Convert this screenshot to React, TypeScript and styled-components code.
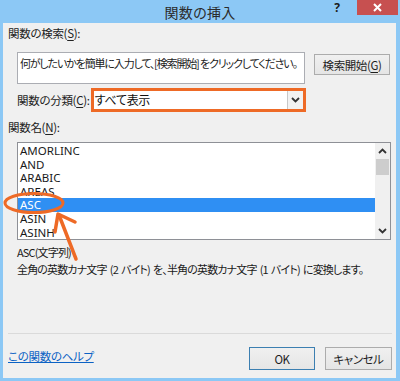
import React from "react";
import styled, { createGlobalStyle } from "styled-components";

const Global = createGlobalStyle`
  html, body { margin: 0; padding: 0; }
  body { width: 400px; height: 381px; overflow: hidden; background: #8cc8f5; }
  * { box-sizing: border-box; }
`;

const JP = `"Noto Sans CJK JP", "Noto Sans", sans-serif`;
const UI = `"Noto Sans", "Noto Sans CJK JP", sans-serif`;

const Window = styled.div`
  position: relative;
  width: 400px;
  height: 381px;
  background: #8cc8f5;
  display: flex;
  flex-direction: column;
  font-family: ${JP};
  font-feature-settings: "palt";
  color: #1e1e1e;
`;

const TitleBar = styled.div`
  height: 23px;
  display: grid;
  grid-template-columns: 1fr auto 1fr;
  align-items: start;
`;

const Title = styled.div`
  grid-column: 2;
  font-size: 14px;
  line-height: 24px;
  color: #2b2b2b;
  letter-spacing: 0.3px;
`;

const Controls = styled.div`
  grid-column: 3;
  display: flex;
  justify-content: flex-end;
  align-items: flex-start;
  padding-right: 2px;
`;

const Help = styled.div`
  font-family: ${UI};
  font-weight: 700;
  font-size: 12px;
  line-height: 16px;
  color: #1a1a1a;
  width: 24px;
  text-align: center;
`;

const Close = styled.div`
  width: 41px;
  height: 15px;
  background: #c75050;
  display: flex;
  align-items: center;
  justify-content: center;
  margin-left: 8px;
`;

const Body = styled.div`
  flex: 1;
  margin: 0 4px 3px 3px;
  background: #f0f0f0;
  display: flex;
  flex-direction: column;
  padding: 2px 4px 8px 5px;
`;

const Label = styled.div<{ $top?: number }>`
  font-size: 11.5px;
  letter-spacing: -0.3px;
  line-height: 16px;
  margin-top: ${(p) => p.$top ?? 0}px;
  color: #222;
  white-space: nowrap;
  u { text-decoration: underline; text-underline-offset: 2px; }
`;

const SearchRow = styled.div`
  display: flex;
  align-items: flex-start;
  margin-top: 11px;
  padding-left: 9px;
`;

const SearchBox = styled.div`
  width: 288px;
  height: 32px;
  background: #fff;
  border: 1px solid #abadb3;
  font-size: 11px;
  letter-spacing: -1.15px;
  line-height: 18px;
  padding: 1px 2px;
  color: #222;
  white-space: nowrap;
  overflow: hidden;
`;

const Button = styled.div<{ $w: number; $default?: boolean }>`
  width: ${(p) => p.$w}px;
  height: ${(p) => (p.$default !== undefined ? 23 : 21)}px;
  border: 1px solid ${(p) => (p.$default ? "#3c7fb1" : "#acacac")};
  background: linear-gradient(#f0f0f0, #e5e5e5);
  font-size: 11.5px;
  letter-spacing: -0.4px;
  display: flex;
  align-items: center;
  justify-content: center;
  color: #1e1e1e;
  white-space: nowrap;
  u { text-decoration: underline; text-underline-offset: 2px; }
`;

const SearchButton = styled(Button)`
  margin-left: 9px;
  margin-top: 2px;
`;

const CategoryRow = styled.div`
  display: flex;
  align-items: center;
  margin-top: 4px;
  padding-left: 9px;
  gap: 1px;
`;

const Select = styled.div`
  width: 215px;
  height: 24px;
  border: 3px solid #ee6a26;
  background: #fff;
  display: flex;
  align-items: stretch;
`;

const SelectValue = styled.div`
  flex: 1;
  font-size: 12px;
  letter-spacing: -0.3px;
  line-height: 18px;
  padding-left: 1px;
  color: #111;
`;

const SelectArrow = styled.div`
  width: 16px;
  border-left: 1px solid #c8c8c8;
  background: #f2f2f2;
  display: flex;
  align-items: center;
  justify-content: center;
`;

const ListBox = styled.div`
  margin: 7px 0 0 9px;
  width: 374px;
  height: 98px;
  border: 1px solid #8e9096;
  background: #fff;
  display: flex;
`;

const Items = styled.div`
  flex: 1;
  padding-top: 1px;
  display: flex;
  flex-direction: column;
`;

const Item = styled.div<{ $selected?: boolean }>`
  height: 13.6px;
  font-family: ${UI};
  font-size: 11.5px;
  line-height: 13.6px;
  padding-left: 2px;
  color: ${(p) => (p.$selected ? "#fff" : "#1a1a1a")};
  background: ${(p) => (p.$selected ? "#2f8ff3" : "transparent")};
`;

const ScrollBar = styled.div`
  width: 15px;
  background: #f0f0f0;
  display: flex;
  flex-direction: column;
  align-items: stretch;
`;

const ScrollBtn = styled.div`
  height: 16px;
  display: flex;
  align-items: center;
  justify-content: center;
`;

const Thumb = styled.div`
  height: 16px;
  margin: 0 1px;
  background: #cdcdcd;
`;

const Track = styled.div`
  flex: 1;
`;

const Desc = styled.div<{ $top?: number }>`
  font-size: 11px;
  letter-spacing: -0.85px;
  word-spacing: 1.5px;
  line-height: 17px;
  margin-top: ${(p) => p.$top ?? 0}px;
  margin-left: 9px;
  color: #1a1a1a;
  white-space: nowrap;
`;

const Spacer = styled.div`
  flex: 1;
`;

const Separator = styled.div`
  height: 1px;
  background: #dadada;
`;

const Footer = styled.div`
  display: flex;
  align-items: center;
  margin-top: 13px;
  gap: 10px;
`;

const HelpLink = styled.a`
  flex: 1;
  font-size: 11.5px;
  letter-spacing: -0.3px;
  color: #0b62c4;
  text-decoration: underline;
  margin-top: -5px;
`;

const Chevron = ({ up }: { up?: boolean }) => (
  <svg width="9" height="6" viewBox="0 0 9 6">
    <path
      d={up ? "M1 5 L4.5 1.5 L8 5" : "M1 1 L4.5 4.5 L8 1"}
      fill="none"
      stroke="#333"
      strokeWidth="1.8"
    />
  </svg>
);

const Overlay = styled.svg`
  position: absolute;
  left: 0;
  top: 0;
  pointer-events: none;
`;

const items = ["AMORLINC", "AND", "ARABIC", "AREAS", "ASC", "ASIN", "ASINH"];

export default function App() {
  return (
    <Window>
      <Global />
      <TitleBar>
        <Title>関数の挿入</Title>
        <Controls>
          <Help>?</Help>
          <Close>
            <svg width="9" height="9" viewBox="0 0 9 9">
              <path d="M1 1 L8 8 M8 1 L1 8" stroke="#fff" strokeWidth="2" />
            </svg>
          </Close>
        </Controls>
      </TitleBar>
      <Body>
        <Label $top={0}>
          関数の検索(<u>S</u>):
        </Label>
        <SearchRow>
          <SearchBox>何がしたいかを簡単に入力して、[検索開始] をクリックしてください。</SearchBox>
          <SearchButton $w={76}>
            検索開始(<u>G</u>)
          </SearchButton>
        </SearchRow>
        <CategoryRow>
          <Label>
            関数の分類(<u>C</u>):
          </Label>
          <Select>
            <SelectValue>すべて表示</SelectValue>
            <SelectArrow>
              <Chevron />
            </SelectArrow>
          </Select>
        </CategoryRow>
        <Label $top={7}>
          関数名(<u>N</u>):
        </Label>
        <ListBox>
          <Items>
            {items.map((it) => (
              <Item key={it} $selected={it === "ASC"}>
                {it}
              </Item>
            ))}
          </Items>
          <ScrollBar>
            <ScrollBtn>
              <Chevron up />
            </ScrollBtn>
            <Thumb />
            <Track />
            <ScrollBtn>
              <Chevron />
            </ScrollBtn>
          </ScrollBar>
        </ListBox>
        <Desc $top={4}>ASC(文字列)</Desc>
        <Desc>全角の英数カナ文字 (2 バイト) を、半角の英数カナ文字 (1 バイト) に変換します。</Desc>
        <Spacer />
        <Separator />
        <Footer>
          <HelpLink>この関数のヘルプ</HelpLink>
          <Button $w={66} $default>
            OK
          </Button>
          <Button $w={67} $default={false}>
            キャンセル
          </Button>
        </Footer>
      </Body>
      <Overlay width="400" height="381" viewBox="0 0 400 381">
        <ellipse cx="34" cy="203" rx="29" ry="9.5" fill="none" stroke="#ee6a26" strokeWidth="3" />
        <path d="M76 259 L59 215" fill="none" stroke="#ee6a26" strokeWidth="3.5" strokeLinecap="round" />
        <path d="M75 222 L58 214 L55 232" fill="none" stroke="#ee6a26" strokeWidth="3.5" strokeLinecap="round" strokeLinejoin="round" />
      </Overlay>
    </Window>
  );
}
